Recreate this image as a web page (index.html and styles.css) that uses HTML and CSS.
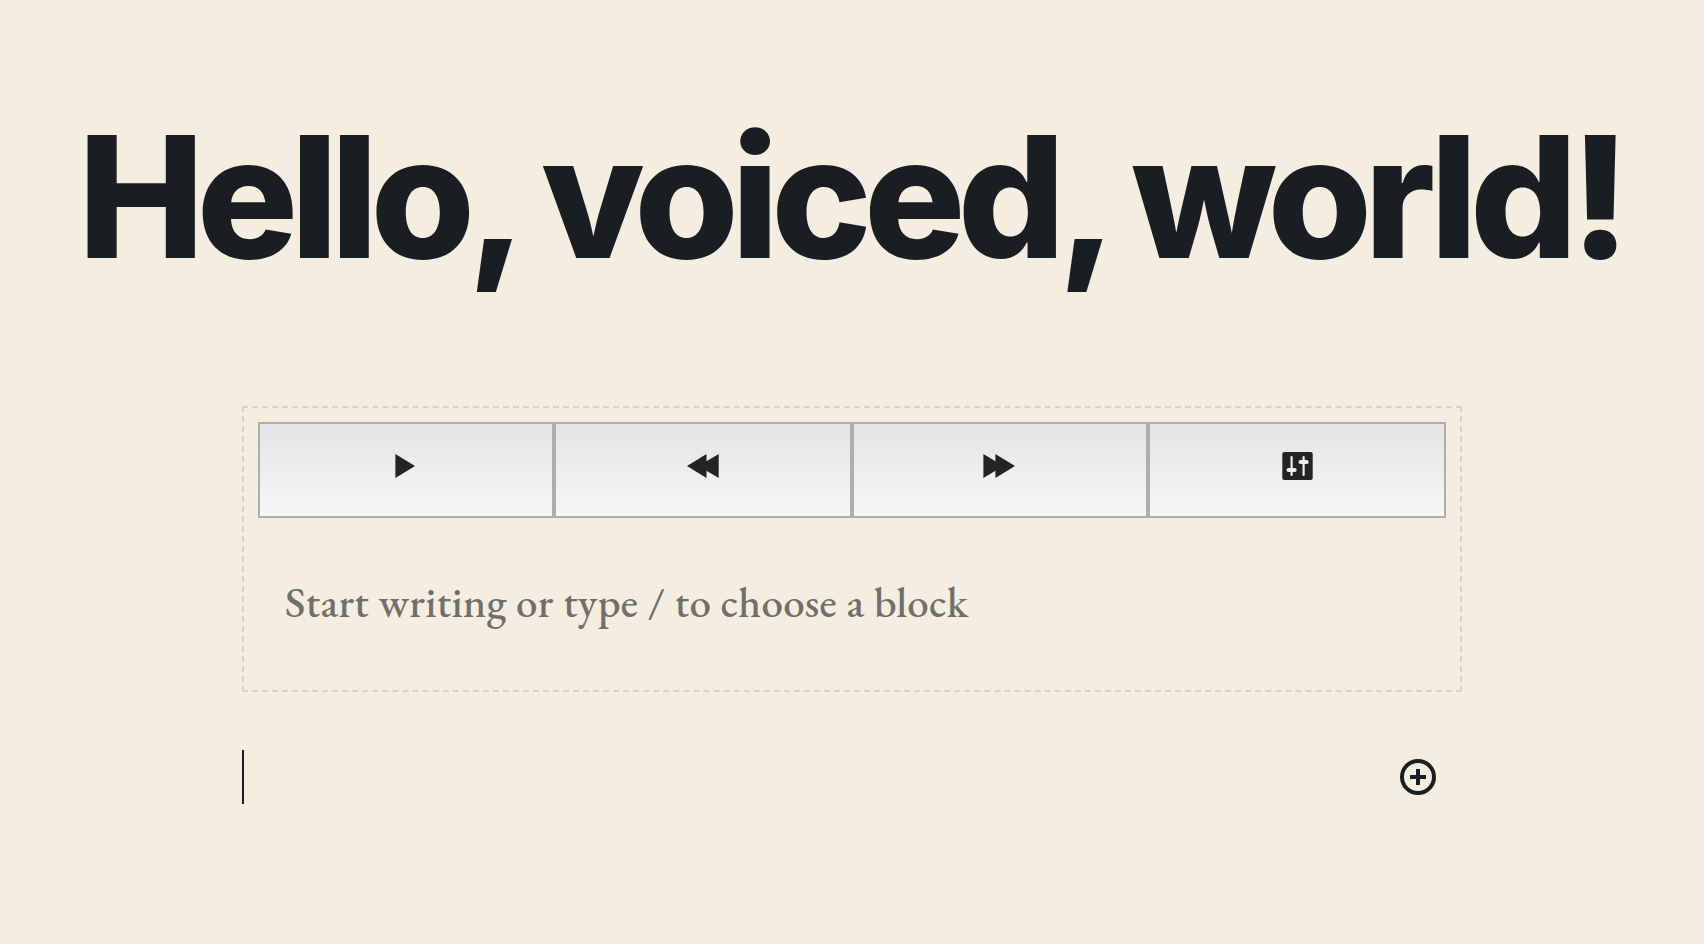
FILE: index.html
```
<!DOCTYPE html>
<html lang="en">
<head>
<meta charset="utf-8">
<title>Hello, voiced, world!</title>
<link rel="stylesheet" href="styles.css">
</head>
<body>
<h1 class="title">Hello, voiced, world!</h1>
<main class="content">
  <section class="block">
    <div class="player">
      <button class="control" aria-label="Play"><svg width="48" height="40" viewBox="0 0 48 40"><path d="M13.400 8v24L33 20z"/></svg></button>
      <button class="control" aria-label="Rewind"><svg width="48" height="40" viewBox="0 0 48 40"><path d="M8 20 27.500 8v7.200L39.700 8v24l-12.200-7.200V32z"/></svg></button>
      <button class="control" aria-label="Fast forward"><svg width="48" height="40" viewBox="0 0 48 40"><path d="M39 20 19.400 8v7.200L7.400 8v24l12-7.200V32z"/></svg></button>
      <button class="control" aria-label="Settings"><svg width="48" height="40" viewBox="0 0 48 40"><rect x="9.300" y="6" width="30.400" height="28" rx="2"/><g class="slider"><rect x="17.500" y="10" width="2.200" height="20" rx="1"/><rect x="13.500" y="22" width="10.200" height="4" rx="2"/><rect x="29.500" y="10" width="2.200" height="20" rx="1"/><rect x="25.500" y="14" width="10.200" height="4" rx="2"/></g></svg></button>
    </div>
    <p class="placeholder">Start writing or type / to choose a block</p>
  </section>
  <div class="appender">
    <span class="caret"></span>
    <button class="add" aria-label="Add block"><svg width="36" height="36" viewBox="0 0 36 36"><circle cx="18" cy="18" r="16"/><path d="M10 18h16M18 10v16"/></svg></button>
  </div>
</main>
</body>
</html>
```
FILE: styles.css
```
* { box-sizing: border-box; }
body {
  margin: 0;
  min-height: 944px;
  background: #f5eee0;
  color: #191e23;
  overflow: hidden;
}
button { margin: 0; padding: 0; border: 0; background: none; font: inherit; }
svg { display: block; }
.title {
  margin: 0;
  padding: 94px 0 0 78px;
  height: 406px;
  font: 800 169px/205px Inter, sans-serif;
  letter-spacing: -7.8px;
  white-space: nowrap;
}
.content { width: 1220px; margin: 0 auto; }
.block {
  height: 286px;
  padding: 14px;
  border: 2px dashed #d2d3d3;
}
.player {
  display: grid;
  grid-template-columns: 296px 298px 296px 298px;
  height: 96px;
}
.control {
  display: flex;
  align-items: center;
  justify-content: center;
  padding-bottom: 8px;
  border: 2px solid #aeaeae;
  background: linear-gradient(#e4e4e4, #f7f7f7);
}
.control svg { fill: #242424; }
.control .slider { fill: #eee; }
.placeholder {
  margin: 57px 0 0 27px;
  font: 500 43px/54px "EB Garamond", "Liberation Serif", serif;
  letter-spacing: 0.3px;
  color: #6f706c;
  white-space: nowrap;
}
.appender {
  display: flex;
  align-items: center;
  justify-content: space-between;
  height: 54px;
  margin-top: 58px;
  padding-right: 26px;
}
.caret { width: 2px; height: 54px; background: #191e23; }
.add svg { fill: none; stroke: #191e23; stroke-width: 4; }
```
